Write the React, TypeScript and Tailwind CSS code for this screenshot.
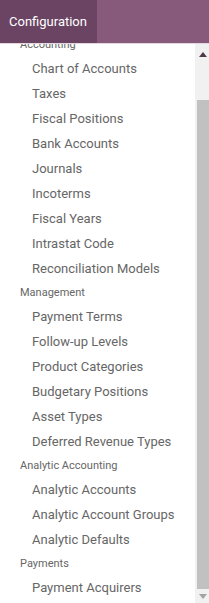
import React from "react";

type Row = { h?: boolean; t: string };

const rows: Row[] = [
  { h: true, t: "Accounting" },
  { t: "Chart of Accounts" },
  { t: "Taxes" },
  { t: "Fiscal Positions" },
  { t: "Bank Accounts" },
  { t: "Journals" },
  { t: "Incoterms" },
  { t: "Fiscal Years" },
  { t: "Intrastat Code" },
  { t: "Reconciliation Models" },
  { h: true, t: "Management" },
  { t: "Payment Terms" },
  { t: "Follow-up Levels" },
  { t: "Product Categories" },
  { t: "Budgetary Positions" },
  { t: "Asset Types" },
  { t: "Deferred Revenue Types" },
  { h: true, t: "Analytic Accounting" },
  { t: "Analytic Accounts" },
  { t: "Analytic Account Groups" },
  { t: "Analytic Defaults" },
  { h: true, t: "Payments" },
  { t: "Payment Acquirers" },
];

export default function App() {
  return (
    <div
      className="w-[209px] h-[603px] overflow-hidden bg-white flex flex-col"
      style={{ fontFamily: "Roboto, 'Liberation Sans', sans-serif" }}
    >
      <div className="h-[43px] shrink-0 bg-[#875a7b] flex">
        <div className="h-full w-[97px] bg-[#6b4463] flex items-center pl-[9px] text-white text-[13px]">
          Configuration
        </div>
      </div>
      <div className="h-px shrink-0 bg-[#e3d6df]" />
      <div className="flex flex-1 min-h-0">
        <div className="flex-1 overflow-hidden">
          <div className="mt-[-11px] flex flex-col">
            {rows.map((r, i) =>
              r.h ? (
                <div
                  key={i}
                  className="h-[23px] flex items-center pt-[2px] pl-[20px] text-[11px] text-[#666666] whitespace-nowrap"
                >
                  {r.t}
                </div>
              ) : (
                <div
                  key={i}
                  className="h-[25px] flex items-center pl-[32px] text-[13px] text-[#666666] whitespace-nowrap"
                >
                  {r.t}
                </div>
              )
            )}
          </div>
        </div>
        <div className="w-[14px] shrink-0 bg-[#f1f1f1] flex flex-col">
          <div className="h-[56px] shrink-0 flex justify-center pt-[8px] pl-[2px]">
            <svg width="8" height="5" viewBox="0 0 8 5">
              <path d="M4 0 L8 5 L0 5 Z" fill="#50384b" />
            </svg>
          </div>
          <div className="flex-1 ml-[2px] bg-[#c1c1c1]" />
          <div className="h-[14px] shrink-0 flex justify-center pt-[5px] pl-[2px]">
            <svg width="8" height="5" viewBox="0 0 8 5">
              <path d="M0 0 L8 0 L4 5 Z" fill="#a3a3a3" />
            </svg>
          </div>
        </div>
      </div>
    </div>
  );
}
